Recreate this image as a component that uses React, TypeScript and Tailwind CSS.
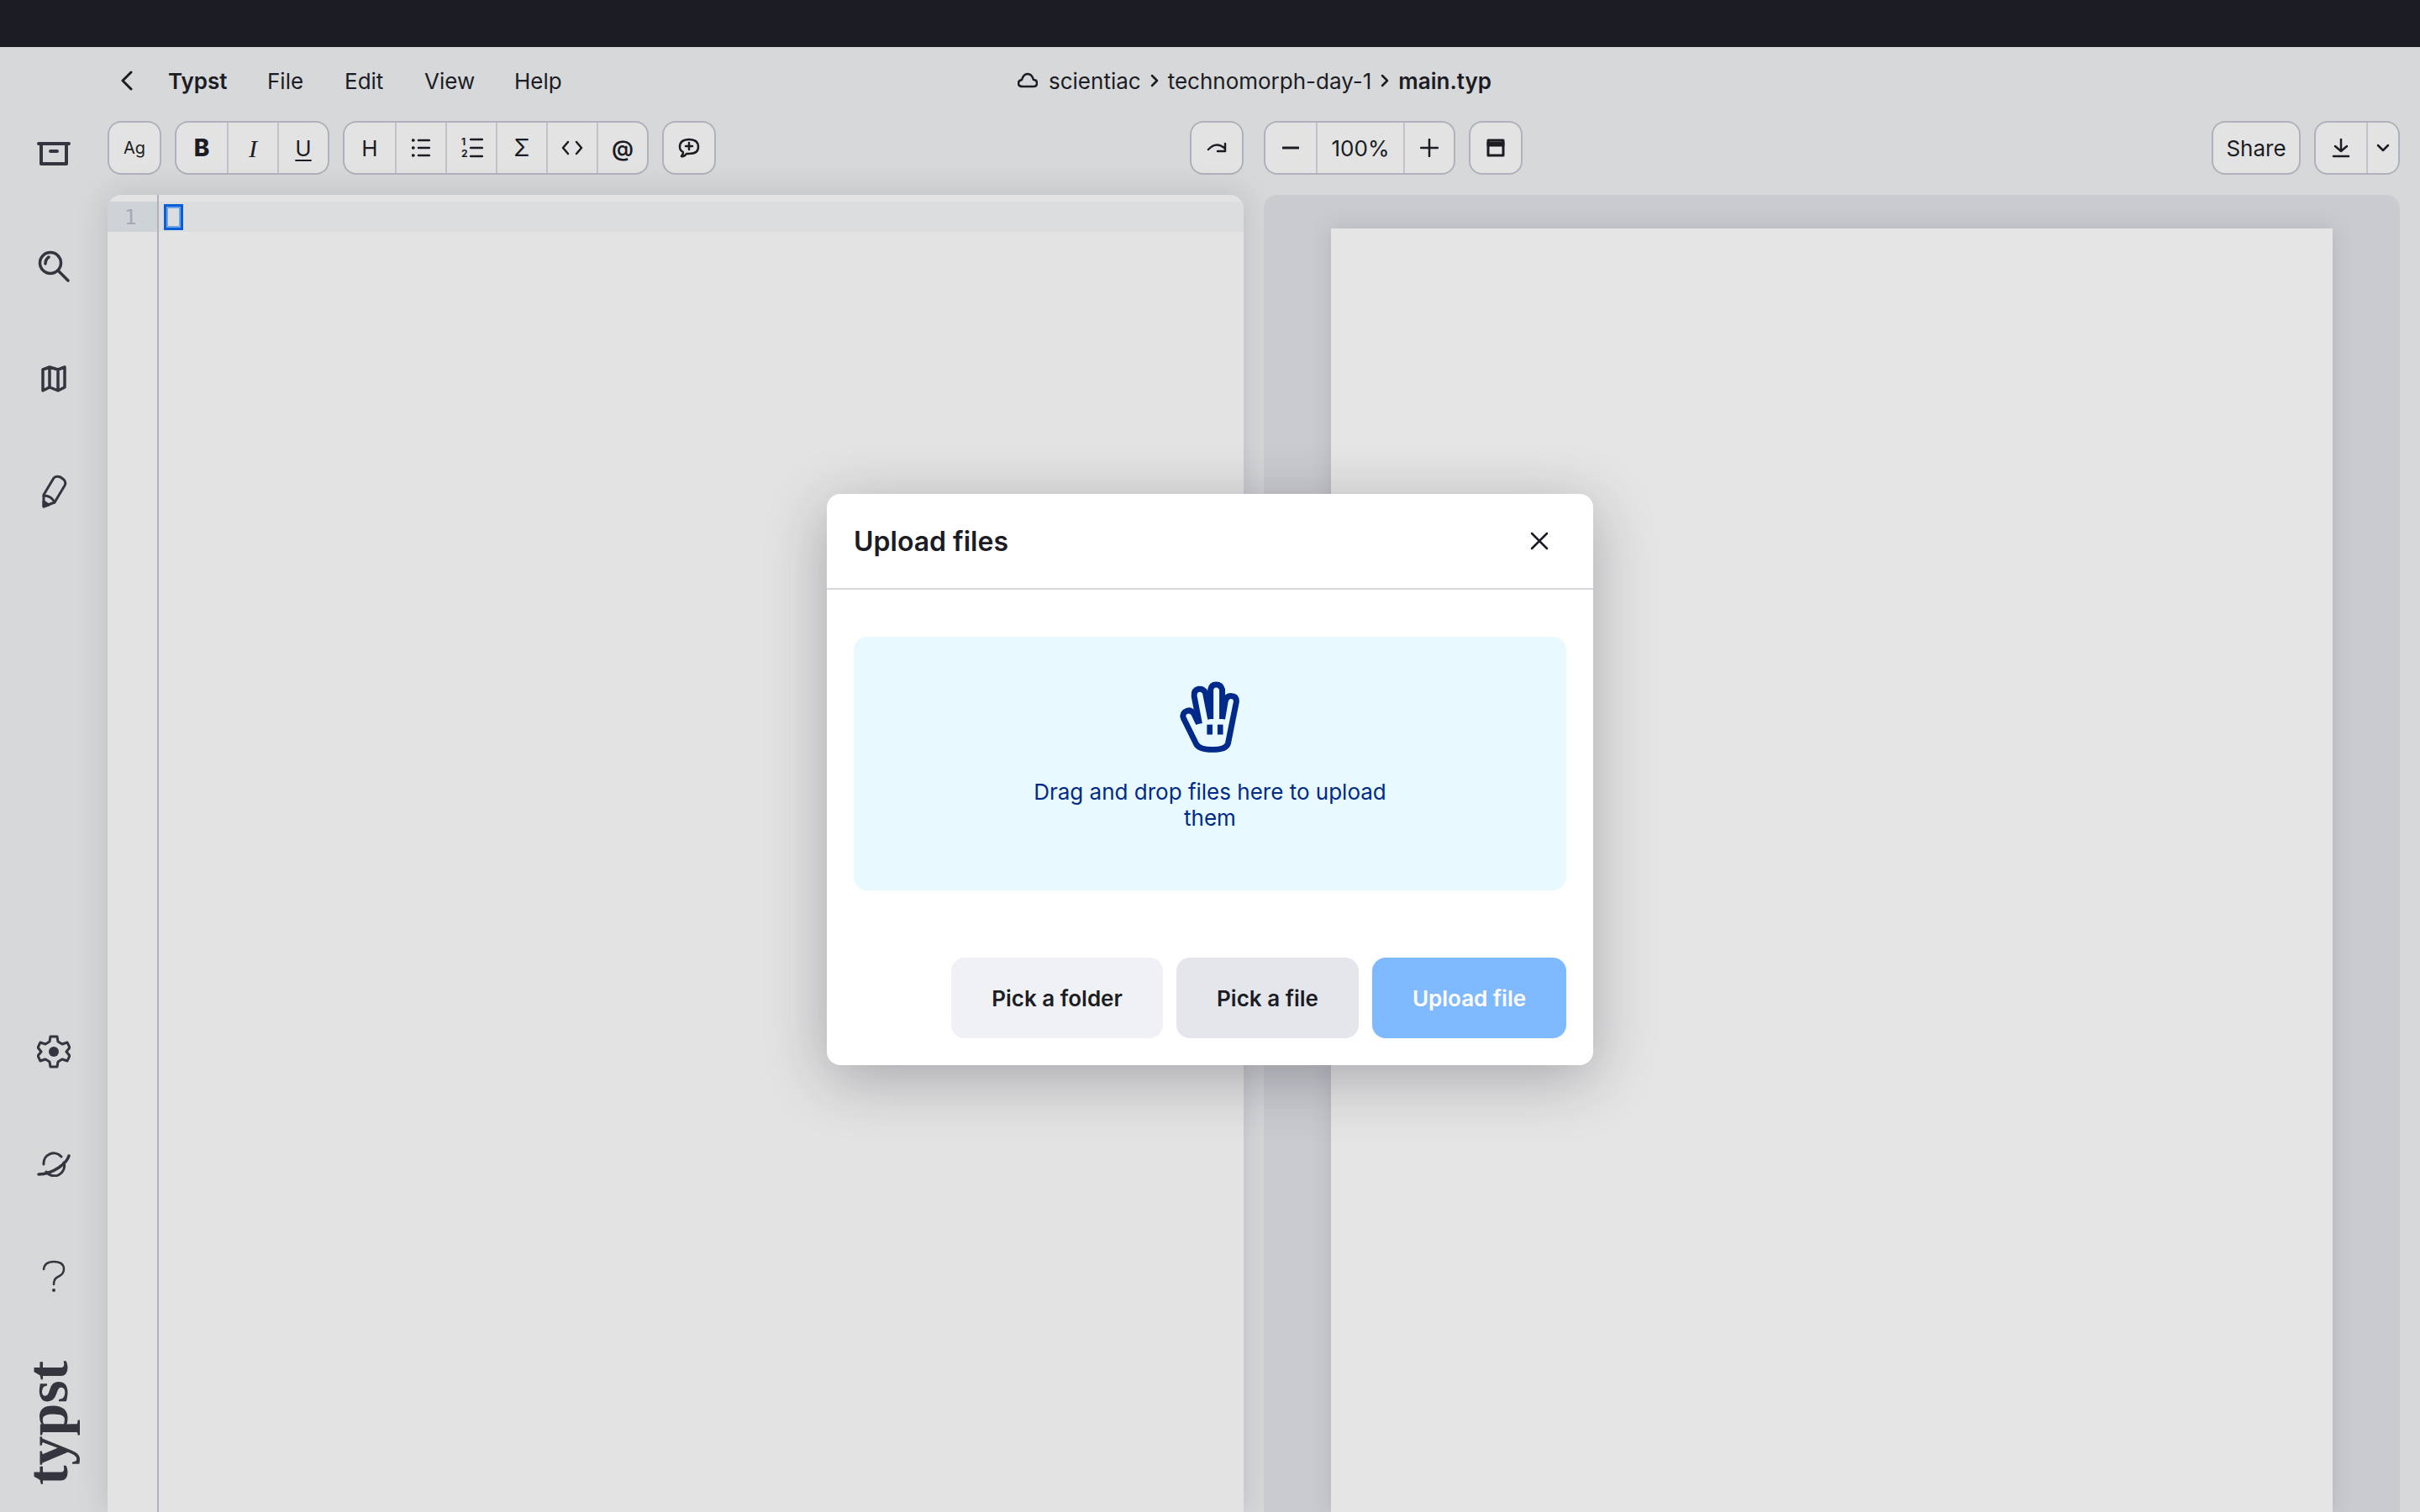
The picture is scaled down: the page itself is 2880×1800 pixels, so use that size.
import type { ReactNode } from "react";

function Ico({ w, h, children, sw = 3 }: { w: number; h: number; children: ReactNode; sw?: number }) {
  return (
    <svg width={w} height={h} viewBox={`0 0 ${w} ${h}`} fill="none" stroke="currentColor" strokeWidth={sw} strokeLinecap="round" strokeLinejoin="round">
      {children}
    </svg>
  );
}

function Cell({ w = "w-[60px]", children }: { w?: string; children: ReactNode }) {
  return (
    <div className={`${w} h-full flex items-center justify-center border-l-2 border-[#c2c2ca] first:border-l-0`}>
      {children}
    </div>
  );
}

function Group({ children }: { children: ReactNode }) {
  return (
    <div className="h-16 flex items-stretch rounded-[16px] border-2 border-[#b1b1bd] bg-[#e3e3e3] text-[#1c1c24] overflow-hidden">
      {children}
    </div>
  );
}

function SideSlot({ children }: { children: ReactNode }) {
  return <div className="h-[134px] flex items-center justify-center text-[#353540]">{children}</div>;
}

function Crumb() {
  return (
    <span className="mx-[11px] flex">
      <Ico w={10} h={16} sw={2.5}>
        <path d="M2 2 L8 8 L2 14" />
      </Ico>
    </span>
  );
}

function HandIcon() {
  return (
    <svg width="75" height="86" viewBox="130 92 225 260" fill="none" stroke="#002a8a" strokeWidth="21" strokeLinecap="butt" strokeLinejoin="round">
      <path d="M200 245 L182 207 Q168 190 150 203 Q140 212 146 226 L190 315 Q200 338 250 338 Q300 338 306 315 L336 165 Q336 145 316 145 Q300 145 296 165 L285 228" />
      <path d="M285 228 L285 122 Q280 104 263 104 Q246 104 243 122 L243 228" />
      <path d="M243 228 L224 132 Q216 118 200 120 Q182 124 184 146 L203 245" />
      <rect x="230" y="248" width="20" height="36" fill="#002a8a" stroke="none" />
      <rect x="268" y="248" width="20" height="36" fill="#002a8a" stroke="none" />
    </svg>
  );
}

export default function App() {
  return (
    <div className="relative w-screen h-screen overflow-hidden flex flex-col bg-[#d7d8da] text-[26px] text-[#1c1c24] font-['Inter',sans-serif]">
      <div className="h-14 shrink-0 bg-[#1c1c24]" />
      <div className="flex-1 flex min-h-0">
        {/* left rail */}
        <aside className="w-32 shrink-0 flex flex-col pt-[60px] pb-[32px]">
          <SideSlot>
            <Ico w={40} h={30} sw={4}>
              <path d="M2 3 H38 M5 3 V27 H35 V3 M16 12 H24" />
            </Ico>
          </SideSlot>
          <SideSlot>
            <Ico w={38} h={38} sw={3.5}>
              <circle cx="15" cy="15" r="12.5" />
              <path d="M24 24 L36 36 M9 16 Q9 11 13 8" />
            </Ico>
          </SideSlot>
          <SideSlot>
            <Ico w={30} h={32} sw={3.5}>
              <path d="M2 5 L10 2 L20 5 L28 2 V26 L20 30 L10 26 L2 30 Z M10 2 V26 M20 5 V30" />
            </Ico>
          </SideSlot>
          <SideSlot>
            <Ico w={32} h={40} sw={3}>
              <path d="M4 24 L16 4 Q19 1 24 3 L28 6 Q31 9 29 13 L17 33 L4 38 Z" />
              <path d="M4 25 Q13 25 17 33" />
              <path d="M4 32 L4 38 L10 36 Z" fill="currentColor" />
            </Ico>
          </SideSlot>
          <div className="flex-1" />
          <SideSlot>
            <Ico w={40} h={40} sw={3}>
              <path d="M16 2 H24 L25 8 L30 11 L36 9 L39 15 L35 20 L39 25 L36 31 L30 29 L25 32 L24 38 H16 L15 32 L10 29 L4 31 L1 25 L5 20 L1 15 L4 9 L10 11 L15 8 Z" />
              <circle cx="20" cy="20" r="6" fill="currentColor" stroke="none" />
            </Ico>
          </SideSlot>
          <SideSlot>
            <Ico w={40} h={30} sw={3}>
              <path d="M8 15 A12 12 0 0 1 29 6 M32 13 A12 12 0 0 1 11 24" />
              <path d="M2 27 Q14 27 26 19 Q36 12 38 5" strokeWidth={3.5} />
            </Ico>
          </SideSlot>
          <SideSlot>
            <Ico w={28} h={40} sw={2.5}>
              <path d="M2 11 Q3 2 14 2 Q26 2 26 11 Q26 17 19 20 Q14 22 14 29" />
              <circle cx="14" cy="36" r="2" fill="currentColor" stroke="none" />
            </Ico>
          </SideSlot>
          <div className="mt-[33px] mr-[14px] self-center [writing-mode:vertical-rl] rotate-180 font-['Liberation_Serif',serif] font-bold text-[70px] leading-none text-[#353540]">
            typst
          </div>
        </aside>

        <main className="flex-1 min-w-0 flex flex-col">
          {/* menu row */}
          <div className="h-20 mb-2 shrink-0 flex items-center">
            <div className="w-[1083px] shrink-0 flex items-center">
              <div className="ml-[15px] w-[57px] shrink-0 flex">
                <Ico w={16} h={24} sw={3}>
                  <path d="M13 2 L3 12 L13 22" />
                </Ico>
              </div>
              <span className="w-[118px] font-semibold">Typst</span>
              <span className="w-[92px]">File</span>
              <span className="w-[95px]">Edit</span>
              <span className="w-[107px]">View</span>
              <span>Help</span>
            </div>
            <div className="flex items-center">
              <Ico w={24} h={20} sw={2.5}>
                <path d="M6 17 H19 Q23 17 23 13 Q23 9 19 9 Q17 2 12 2 Q7 2 5 9 Q1 10 1 13 Q1 17 6 17 Z" />
              </Ico>
              <span className="ml-[13px]">scientiac</span>
              <Crumb />
              <span>technomorph-day-1</span>
              <Crumb />
              <span className="font-semibold">main.typ</span>
            </div>
          </div>

          {/* toolbar row */}
          <div className="h-16 shrink-0 flex items-stretch">
            <div className="w-[1288px] shrink-0 flex gap-4">
              <Group>
                <Cell>
                  <span className="text-[20px]">Ag</span>
                </Cell>
              </Group>
              <Group>
                <Cell>
                  <span className="font-extrabold text-[28px]">B</span>
                </Cell>
                <Cell>
                  <span className="italic font-['Liberation_Serif',serif] text-[30px]">I</span>
                </Cell>
                <Cell>
                  <span className="underline underline-offset-4 decoration-2 text-[26px]">U</span>
                </Cell>
              </Group>
              <Group>
                <Cell>
                  <span className="text-[26px]">H</span>
                </Cell>
                <Cell>
                  <Ico w={22} h={24} sw={2.5}>
                    <path d="M8 3 H21 M8 12 H21 M8 21 H21" />
                    <path d="M1.5 3 H2 M1.5 12 H2 M1.5 21 H2" strokeWidth={3.5} />
                  </Ico>
                </Cell>
                <Cell>
                  <span className="relative w-[24px] h-[28px] flex">
                    <span className="flex flex-col items-start text-[12px] font-bold leading-[14px]">
                      <span>1</span>
                      <span>2</span>
                    </span>
                    <span className="ml-[2px] mt-[1px]">
                      <Ico w={16} h={26} sw={2.5}>
                        <path d="M1 3 H15 M1 13 H15 M1 23 H15" />
                      </Ico>
                    </span>
                  </span>
                </Cell>
                <Cell>
                  <span className="text-[28px]">Σ</span>
                </Cell>
                <Cell>
                  <Ico w={26} h={18} sw={2.5}>
                    <path d="M8 2 L2 9 L8 16 M18 2 L24 9 L18 16" />
                  </Ico>
                </Cell>
                <Cell>
                  <span className="font-semibold text-[26px]">@</span>
                </Cell>
              </Group>
              <Group>
                <Cell>
                  <Ico w={26} h={24} sw={2.5}>
                    <path d="M13 2 Q24 2 24 11 Q24 19 13 19 L10 19 Q7 23 4 22 Q6 20 6 17 Q2 15 2 11 Q2 2 13 2 Z" />
                    <path d="M13 6 V14 M9 10 H17" />
                  </Ico>
                </Cell>
              </Group>
            </div>
            <div className="w-[1216px] shrink-0 flex">
              <Group>
                <Cell>
                  <Ico w={24} h={14} sw={2.5}>
                    <path d="M2 9 Q11 -1 21 7" />
                    <path d="M22 2 V11 H13" />
                  </Ico>
                </Cell>
              </Group>
              <div className="ml-6">
                <Group>
                  <Cell>
                    <Ico w={20} h={4} sw={3}>
                      <path d="M1 2 H19" />
                    </Ico>
                  </Cell>
                  <Cell w="w-[104px]">
                    <span>100%</span>
                  </Cell>
                  <Cell>
                    <Ico w={22} h={22} sw={2.5}>
                      <path d="M1 11 H21 M11 1 V21" />
                    </Ico>
                  </Cell>
                </Group>
              </div>
              <div className="ml-4">
                <Group>
                  <Cell>
                    <Ico w={22} h={22} sw={3}>
                      <path d="M2 2 H20 V20 H2 Z" />
                      <path d="M2 5 H20 V8 H2 Z" fill="currentColor" />
                    </Ico>
                  </Cell>
                </Group>
              </div>
            </div>
            <div className="flex gap-4">
              <Group>
                <div className="w-[102px] h-full flex items-center justify-center">Share</div>
              </Group>
              <Group>
                <Cell>
                  <Ico w={22} h={24} sw={2.5}>
                    <path d="M11 2 V16 M4 10 L11 16 L18 10 M2 22 H20" />
                  </Ico>
                </Cell>
                <Cell w="w-[38px]">
                  <Ico w={16} h={10} sw={2.5}>
                    <path d="M2 2 L8 8 L14 2" />
                  </Ico>
                </Cell>
              </Group>
            </div>
          </div>

          {/* panes */}
          <div className="flex-1 min-h-0 mt-6 pr-6 grid grid-cols-2 gap-6">
            <section className="rounded-t-[16px] bg-[#e3e3e3] shadow-[0_0_36px_rgba(90,90,105,0.22)] flex overflow-hidden">
              <div className="w-[61px] shrink-0 border-r-2 border-[#b1b1bd] pt-2">
                <div className="h-9 bg-[#ced3d7] flex items-center pl-[20px] pt-[2px] font-['DejaVu_Sans_Mono',monospace] text-[24px] text-[#a4a8b4]">
                  1
                </div>
              </div>
              <div className="flex-1 pt-2">
                <div className="h-9 bg-[#dcdddf] flex items-center pl-[6px]">
                  <div className="w-[23px] h-[31px] border-[3px] border-[#0a5fd6] bg-[#dcdddf] outline-2 -outline-offset-5 outline-[#6ea3e6]" />
                </div>
              </div>
            </section>
            <section className="rounded-t-[16px] bg-[#cacbcf] px-20 pt-10 flex">
              <div className="flex-1 bg-[#e5e5e5] shadow-[0_0_24px_rgba(90,90,105,0.18)]" />
            </section>
          </div>
        </main>
      </div>

      {/* upload dialog */}
      <div className="absolute left-[984px] top-[588px] w-[912px] h-[680px] rounded-[16px] bg-white shadow-[0_16px_72px_rgba(30,30,45,0.3)] flex flex-col">
        <div className="h-[114px] shrink-0 px-8 flex items-center justify-between border-b-2 border-[#d3d6da]">
          <h2 className="mt-[2px] text-[32px] font-semibold text-[#1c1c24]">Upload files</h2>
          <div className="mr-[21px] text-[#1c1c24]">
            <Ico w={22} h={22} sw={2.5}>
              <path d="M2 2 L20 20 M20 2 L2 20" />
            </Ico>
          </div>
        </div>
        <div className="flex-1 px-8 pt-[56px] pb-8 flex flex-col">
          <div className="h-[302px] rounded-[16px] bg-[#e8f9ff] flex flex-col items-center pt-[53px] text-[#002a8a]">
            <HandIcon />
            <p className="mt-[30px] w-[440px] text-center leading-[31px]">Drag and drop files here to upload them</p>
          </div>
          <div className="mt-auto flex justify-end gap-4 font-semibold">
            <button className="w-[252px] h-24 rounded-[16px] bg-[#f0f1f5]">Pick a folder</button>
            <button className="w-[217px] h-24 rounded-[16px] bg-[#e5e6eb]">Pick a file</button>
            <button className="w-[231px] h-24 rounded-[16px] bg-[#7fb9ff] text-white">Upload file</button>
          </div>
        </div>
      </div>
    </div>
  );
}
